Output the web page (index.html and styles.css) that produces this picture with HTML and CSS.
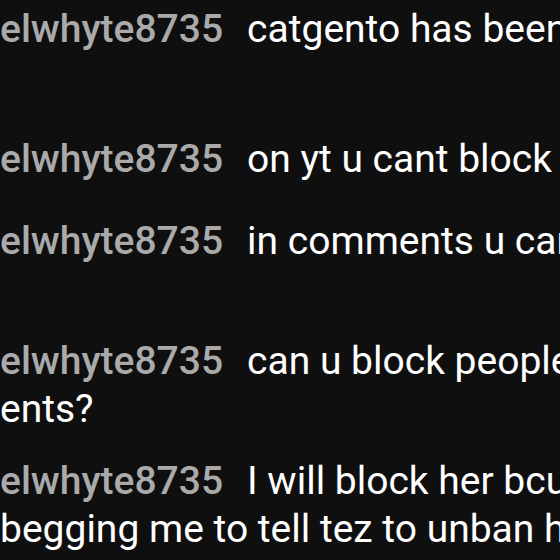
FILE: index.html
```html
<!DOCTYPE html>
<html lang="en">
  <head>
    <meta charset="UTF-8" />
    <meta name="viewport" content="width=device-width, initial-scale=1.0" />
    <title>Live chat</title>
    <link rel="stylesheet" href="styles.css">
  </head>
  <body>
    <!-- chat list, cropped on the left and right -->
    <div class="chat">
      <div class="item tall">
        <div class="line"><span class="author">elwhyte8735</span><span class="msg">catgento has been banned from the chat lol</span></div>
        <div class="line"></div>
      </div>
      <div class="item tall">
        <div class="line"><span class="author">elwhyte8735</span><span class="msg">on yt u cant block them</span></div>
      </div>
      <div class="item">
        <div class="line"><span class="author">elwhyte8735</span><span class="msg">in comments u can block them</span></div>
        <div class="line"></div>
      </div>
      <div class="item">
        <div class="line"><span class="author">elwhyte8735</span><span class="msg">can u block people in comm</span></div>
        <div class="line"><span class="msg">ents?</span></div>
      </div>
      <div class="item">
        <div class="line"><span class="author">elwhyte8735</span><span class="msg">I will block her bcuz she keeps</span></div>
        <div class="line"><span class="msg">begging me to tell tez to unban her</span></div>
      </div>
    </div>
  </body>
</html>
```

FILE: styles.css
```css
html,
body {
  margin: 0;
  padding: 0;
  height: 100%;
  overflow: hidden;
  background: #0f0f0f;
}

body {
  font-family: Roboto, "Liberation Sans", Arial, sans-serif;
  font-size: 39px;
}

.chat {
  display: flex;
  flex-direction: column;
  padding-top: 5px;
}

/* one chat message */
.item {
  padding-bottom: 24px;
}

.item.tall {
  padding-bottom: 34px;
}

.line {
  height: 48px;
  line-height: 48px;
  white-space: nowrap;
  overflow: hidden;
}

.author {
  color: #aaaaaa;
  font-weight: 500;
  margin-right: 24px;
}

.msg {
  color: #ffffff;
}
```
